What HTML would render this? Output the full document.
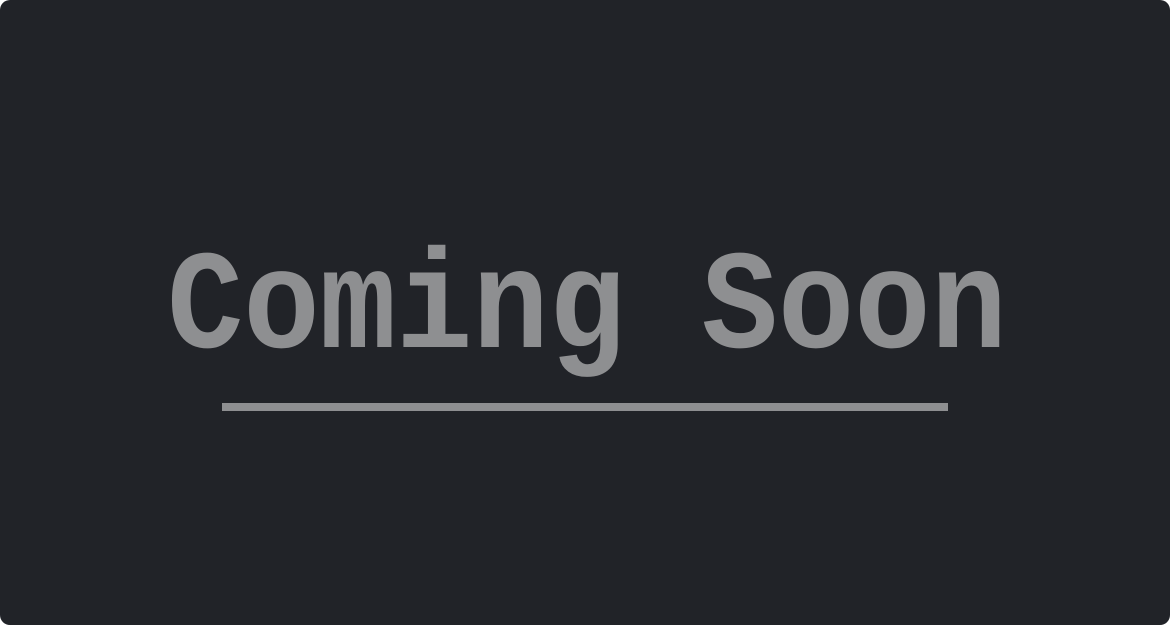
<!DOCTYPE html>
<html><head><style>
html,body{margin:0;padding:0;background:#fff;width:1170px;height:625px;overflow:hidden}
.card{position:absolute;left:0;top:0;width:1170px;height:625px;background:#212328;border-radius:10px}
.bar{position:absolute;left:222px;top:403px;width:726px;height:8px;background:#8e8f91}
svg{position:absolute;left:0;top:0}
</style></head><body>
<div class="card"></div>
<svg width="1170" height="625">
<text transform="translate(0,347) scale(1,1.12)" x="167" y="0" font-family="Liberation Mono, monospace" font-weight="bold" font-size="126" fill="#8e8f91" textLength="840" lengthAdjust="spacingAndGlyphs">Coming Soon</text>
</svg>
<div class="bar"></div>
</body></html>
